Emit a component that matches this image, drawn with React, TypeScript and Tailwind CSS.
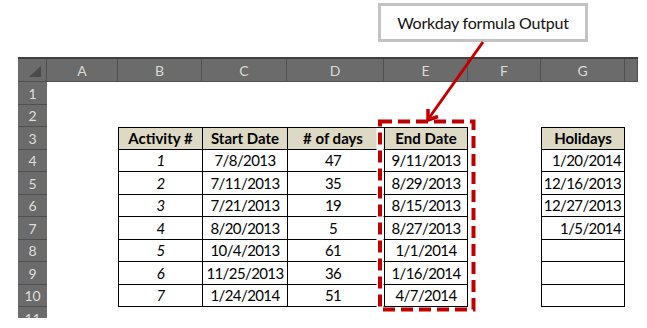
import React from 'react';

// column widths of the sheet (row header, A..H)
const cols = [
  { key: 'A', w: 'w-[71px]' },
  { key: 'B', w: 'w-[84px]' },
  { key: 'C', w: 'w-[85px]' },
  { key: 'D', w: 'w-[97px]' },
  { key: 'E', w: 'w-[84px]' },
  { key: 'F', w: 'w-[73px]' },
  { key: 'G', w: 'w-[84px]' },
  { key: 'H', w: 'w-[13px]' },
];

const rowHeights = ['h-[23px]', 'h-[22px]', 'h-[23px]', 'h-[22px]', 'h-[23px]', 'h-[22px]', 'h-[23px]', 'h-[22px]', 'h-[23px]', 'h-[22px]'];

const data = [
  ['1', '7/8/2013', '47', '9/11/2013', '1/20/2014'],
  ['2', '7/11/2013', '35', '8/29/2013', '12/16/2013'],
  ['3', '7/21/2013', '19', '8/15/2013', '12/27/2013'],
  ['4', '8/20/2013', '5', '8/27/2013', '1/5/2014'],
  ['5', '10/4/2013', '61', '1/1/2014', ''],
  ['6', '11/25/2013', '36', '1/16/2014', ''],
  ['7', '1/24/2014', '51', '4/7/2014', ''],
];

function RowHead({ n, h }: { n: number; h: string }) {
  return (
    <div className={`w-[29px] ${h} shrink-0 bg-[#6b6b6b] border-b border-[#505050] flex items-center justify-center text-[14px] text-[#dedede]`}>
      {n}
    </div>
  );
}

export default function App() {
  return (
    <div className="relative w-[647px] h-[328px] bg-white overflow-hidden font-['Lato','Liberation_Sans',sans-serif] text-black">
      {/* Callout */}
      <div className="h-[57px] pl-[378px] pt-[3px]">
        <div className="w-[210px] h-[39px] border-[3px] border-[#c3c3c3] bg-white flex items-center justify-center text-[16px] tracking-[-0.2px] text-[#111]">
          Workday formula Output
        </div>
      </div>

      <div className="ml-[18px] w-[620px]">
        {/* Column headers */}
        <div className="flex h-[25px] border-t-2 border-[#404040] bg-[#6b6b6b] border-b border-b-[#505050]">
          <div className="w-[29px] shrink-0 border-r border-[#505050] relative">
            <svg width="14" height="12" viewBox="0 0 14 12" className="absolute right-[4px] bottom-[3px]">
              <polygon points="13,0 13,11 1,11" fill="#4a4a4a" />
            </svg>
          </div>
          {cols.map((c) => (
            <div key={c.key} className={`${c.w} shrink-0 border-r border-[#505050] flex items-center justify-center text-[14px] text-[#dadada]`}>
              {c.key === 'H' ? '' : c.key}
            </div>
          ))}
        </div>

        {/* Rows */}
        {rowHeights.map((h, i) => {
          const r = i + 1;
          const isHead = r === 3;
          const d = r >= 4 ? data[r - 4] : null;
          const inTable = r >= 3;
          const cell = `shrink-0 border-l border-black flex items-center ${inTable ? 'border-b' : ''} ${r === 3 ? 'border-t' : ''} ${isHead ? 'bg-[#ddd9c4] font-bold' : 'tracking-[-0.6px]'}`;
          return (
            <div key={r} className={`flex ${h} text-[15px]`}>
              <RowHead n={r} h={h} />
              <div className="w-[71px] shrink-0" />
              {inTable ? (
                <>
                  <div className={`w-[84px] ${cell} justify-center ${isHead ? '' : 'italic'}`}>{isHead ? 'Activity #' : d![0]}</div>
                  <div className={`w-[85px] ${cell} justify-center`}>{isHead ? 'Start Date' : d![1]}</div>
                  <div className={`w-[97px] ${cell} justify-center pr-[6px]`}>{isHead ? '# of days' : d![2]}</div>
                  <div className={`w-[84px] ${cell} border-r justify-center`}>{isHead ? 'End Date' : d![3]}</div>
                  <div className="w-[73px] shrink-0" />
                  <div className={`w-[84px] ${cell} border-r ${isHead ? 'justify-center' : 'justify-end pr-[3px]'}`}>{isHead ? 'Holidays' : d![4]}</div>
                </>
              ) : (
                <div className="flex-1" />
              )}
            </div>
          );
        })}

        {/* Row 11, cut off */}
        <div className="flex h-[11px] overflow-hidden">
          <div className="w-[29px] shrink-0 bg-[#6b6b6b] overflow-hidden">
            <div className="h-[22px] flex items-center justify-center text-[14px] text-[#dedede]">11</div>
          </div>
        </div>
      </div>

      {/* Dashed highlight and arrow */}
      <svg className="absolute inset-0 pointer-events-none" width="647" height="328">
        <line x1="380" y1="128" x2="380" y2="307" stroke="#ffffff" strokeWidth="7" />
        <rect x="380" y="121.5" width="93.5" height="188" fill="none" stroke="#c00000" strokeWidth="4" strokeDasharray="12 6" />
        <line x1="483" y1="42" x2="429" y2="118" stroke="#c00000" strokeWidth="3" />
        <polyline points="428,109 428,120 438,116.5" fill="none" stroke="#c00000" strokeWidth="3.5" strokeLinejoin="miter" />
      </svg>
    </div>
  );
}
